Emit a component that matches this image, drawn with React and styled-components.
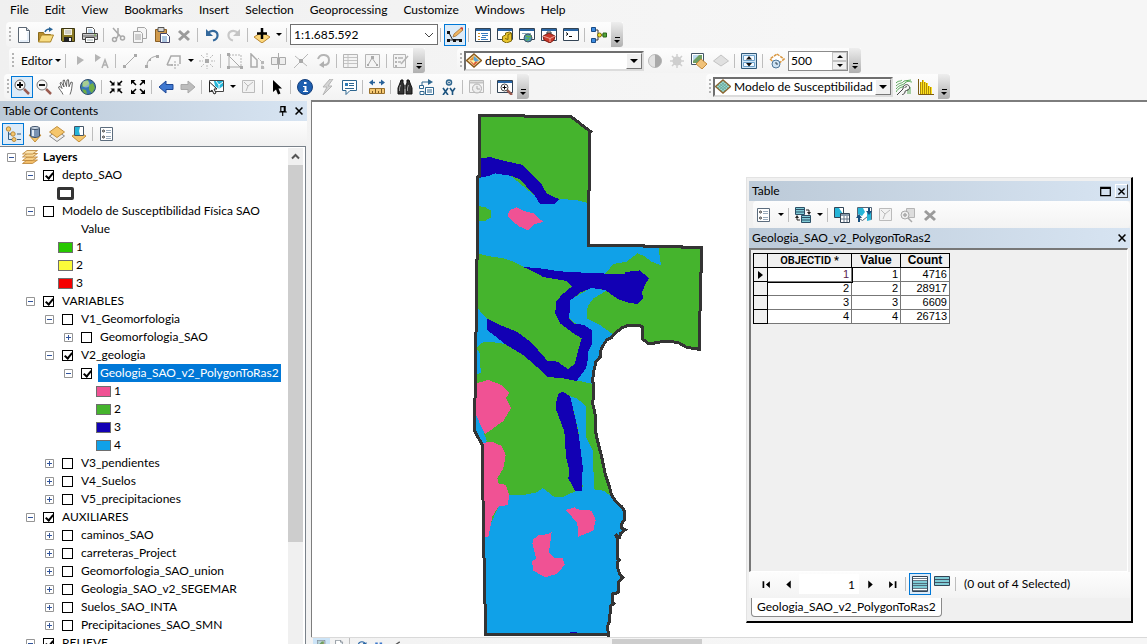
import styled, { createGlobalStyle, css } from 'styled-components'
import { useState } from 'react'

// 16x16 drawings, one for each tool
const glyphs = {
  newDoc: <><path d='M2.500 .5h8l3 3v12h-11z' fill='#fff' stroke='#5b6673' /><path d='M10.500 .5v3h3' fill='#d7dde4' stroke='#5b6673' /><path d='M12 5v9H4' fill='none' stroke='#cfe0f3' /></>,
  open: <><path d='M.5 14.500v-9h5l1 2h6v7z' fill='#b98f2e' stroke='#8a6a1c' /><path d='M.5 15l3-7h12l-3 7z' fill='#f7dc82' stroke='#a98327' /><path d='M7 5c1-3 3-3 5-3' stroke='#2a6496' fill='none' strokeWidth='1.500' /><path d='M11 0l4 2.200-4 2.800z' fill='#2a6496' /></>,
  save: <><path d='M1.500 1.500h13v13h-12l-1-1z' fill='#8a7a25' stroke='#3b3512' /><path d='M4 2h8v6H4z' fill='#f4f1df' /><path d='M5 4h6M5 6h6' stroke='#aaa' /><path d='M4 10h8v5H4z' fill='#222' /><path d='M9 11h2v3H9z' fill='#eee' /></>,
  print: <><path d='M4.500 6.500v-6h6l2 2v4' fill='#fff' stroke='#555' /><path d='M6 3h4M6 5h5' stroke='#8cb6db' /><path d='M.5 6.500h15v6H.5z' fill='#c9c9c9' stroke='#444' /><path d='M1 9h14' stroke='#666' /><path d='M3.500 10.500h9v5h-9z' fill='#fff' stroke='#444' /><path d='M5 13h6' stroke='#9aa' /><path d='M12 8h2' stroke='#6a3' /></>,
  cut: <g fill='none' stroke='#a8a8a8' strokeWidth='1.500'><path d='M3 1l8 9M8 1v8l-2 3' /><circle cx='4.500' cy='12.500' r='2' /><circle cx='12.500' cy='11' r='2' /></g>,
  copy: <g fill='#f5f5f5' stroke='#a5a5a5'><path d='M5.500 .5h7l2 2v9h-9z' /><path d='M1.500 4.500h7l2 2v9h-9z' /><path d='M3 8h6M3 10h6M3 12h6' /></g>,
  paste: <><path d='M1.500 2.500h11v12h-11z' fill='#d09a4c' stroke='#8b5f23' /><path d='M4 .5h6v4H4z' fill='#d8d8d8' stroke='#555' /><path d='M6.500 6.500h6l3 3v6h-9z' fill='#fff' stroke='#446' /><path d='M8 10h5M8 12h5M8 14h5' stroke='#5d8fc4' /></>,
  remove: <path d='M3 4l10 9M13 4L3 13' stroke='#9b9b9b' strokeWidth='3' />,
  undo: <><path d='M4 6c4-4 10-2 9.500 3-.3 2.500-2 4-4.500 4.500' fill='none' stroke='#34699c' strokeWidth='2.200' /><path d='M2 2v7h7z' fill='#34699c' /></>,
  redo: <><path d='M12 6c-4-4-10-2-9.500 3 .3 2.500 2 4 4.500 4.500' fill='none' stroke='#c8c8c8' strokeWidth='2.200' /><path d='M14 2v7H7z' fill='#c4c4c4' /></>,
  addData: <><path d='M8 5l8 5-8 6-8-6z' fill='#fbd679' stroke='#b98531' /><path d='M8 1v11M3 6.500h10' stroke='#000' strokeWidth='2.500' /></>,
  editorBar: <><path d='M1.500 5l4 7.500h9M2 13h13' stroke='#222' fill='none' /><path d='M0 4h3v3H0zM0 12h3v3H0zM6 12h3v3H6zM12 12h3v3h-3z' fill='#111' /><path d='M6 10l1-3 7-6 2 2-7 6z' fill='#efb45e' stroke='#a1743b' strokeWidth='.8' /><path d='M13 1l2-1 2 2-1 1z' fill='#d83a2d' /></>,
  tocWin: <><path d='M.5 1.500h15v13H.5z' fill='#fff' stroke='#345' /><path d='M1 2h14v2H1z' fill='#2865a5' /><path d='M3 6.500h2M3 9.500h2M3 12.500h2' stroke='#d08f25' /><path d='M6 6.500h7M7 8.500h6M6 10.500h5M6 12.500h7' stroke='#357ac0' /></>,
  catalog: <><path d='M.5 1.500h15v11H.5z' fill='#fff' stroke='#345' /><path d='M1 2h14v2H1z' fill='#2865a5' /><path d='M5.500 9.500l3-1.500v-2l4-1 2 1v8l-5 2-4-2z' fill='#e9c52e' stroke='#806a0a' /><path d='M8 11.500l3 1v-5l3-1' stroke='#806a0a' fill='none' /></>,
  search: <><path d='M.5 1.500h15v11H.5z' fill='#fff' stroke='#345' /><path d='M1 2h14v2H1z' fill='#2865a5' /><path d='M3 6.500h9' stroke='#8ab' /><circle cx='9' cy='11' r='4' fill='#4b9bb5' stroke='#456' /><path d='M7 9l3 1 2-1M7 13l3-1' stroke='#63b24c' strokeWidth='1.500' fill='none' /></>,
  toolbox: <><path d='M.5 1.500h15v12H.5z' fill='#fff' stroke='#345' /><path d='M1 2h14v2H1z' fill='#2865a5' /><path d='M2 9l6-3 6 3-1 4-4 3-6-3z' fill='#c9382a' stroke='#7d1b12' /><path d='M2 9l7 2.500 5-2.500M9 11v4' fill='none' stroke='#f2a598' /><path d='M6 7v-2h4v2' fill='none' stroke='#333' /></>,
  python: <><path d='M.5 1.500h15v12H.5z' fill='#fff' stroke='#345' /><path d='M1 2h14v2H1z' fill='#2865a5' /><path d='M3 5.500l2 1.500-2 1.500M6 9.500h3' fill='none' stroke='#000' /></>,
  model: <><path d='M4 3h3v10H4M7 8h6' fill='none' stroke='#333' /><path d='M.5 .5h4v4h-4zM.5 11.500h4v4h-4z' fill='#3d8be0' stroke='#174b86' /><circle cx='8.500' cy='8' r='2' fill='#f3e12c' stroke='#7b7009' /><path d='M12 6h3.500v4H12z' fill='#50a538' stroke='#2c661c' /></>,
  arrowTool: <path d='M5 3v9l7-5z' fill='#b5b5b5' />,
  arrowA: <><path d='M1 1v8l6-4.500z' fill='#b5b5b5' /><path d='M8 15l3-8 3 8M9 12h4' stroke='#b0b0b0' fill='none' strokeWidth='1.500' /></>,
  line: <><path d='M3 13L13 3' stroke='#aaa' /><path d='M1 12h3v3H1zM12 1h3v3h-3z' fill='#aaa' /></>,
  arc: <><path d='M3 13c0-6 4-9 10-10' stroke='#aaa' fill='none' /><path d='M1 12h3v3H1zM12 2h3v3h-3zM5 6h2v2H5z' fill='#aaa' /></>,
  poly: <><path d='M1 12l4-9h9v8M1 12h6' stroke='#aaa' fill='none' strokeWidth='1.500' /><path d='M9 8v8M5 12h8' stroke='#aaa' strokeDasharray='2 1' /></>,
  burst: <><path d='M6 6h4v4H6z' fill='#aaa' /><path d='M8 0v4M8 12v4M0 8h4M12 8h4M2 2l3 3M14 2l-3 3M2 14l3-3M14 14l-3-3' stroke='#b8b8b8' strokeDasharray='2 1' /></>,
  vertices: <><path d='M2 2h12v12' stroke='#b5b5b5' fill='none' strokeDasharray='2 1' /><path d='M0 0h3v3H0zM0 13h3v3H0zM13 13h3v3h-3z' fill='#aaa' /><path d='M2 3v11h11z' stroke='#aaa' fill='none' /></>,
  reshape: <><path d='M2 1v13h6V7z' stroke='#aaa' fill='none' strokeWidth='1.500' /><path d='M9 5l4 4v6h3' stroke='#b5b5b5' strokeDasharray='2 1' fill='none' /><path d='M12 8h3v3h-3zM12 13h3v3h-3z' fill='#b8b8b8' /></>,
  cutPoly: <path d='M.5 4.500h6v7h-6zM8.500 4.500h6v7h-6zM7.500 0v16' stroke='#aaa' fill='#eee' />,
  split: <><path d='M1 15L15 1M2 3l12 10' stroke='#b8b8b8' /><path d='M6 6h4v4H6z' fill='#aaa' /></>,
  rotate: <><path d='M3 6c2-6 11-5 11 1 0 3-2 5-5 5' stroke='#b5b5b5' strokeWidth='2' fill='none' /><path d='M4 12l5-4v7z' fill='#b0b0b0' /></>,
  attributes: <><path d='M.5 1.500h14v13H.5z' fill='#f4f4f4' stroke='#b5b5b5' /><path d='M1 4.500h13M1 7.500h13M1 10.500h13M5 2v12' stroke='#c4c4c4' /></>,
  sketch: <><path d='M.5 1.500h14v13H.5z' fill='#f4f4f4' stroke='#b5b5b5' /><path d='M3 12l4-7 5 7' stroke='#aaa' fill='none' /><path d='M6 3h3v3H6zM2 11h2v2H2zM11 11h2v2h-2z' fill='#aaa' /></>,
  create: <><path d='M.5 1.500h12v13H.5z' fill='#f4f4f4' stroke='#b5b5b5' /><path d='M2 4h2v2H2zM2 8h2v2H2zM2 12h2v2H2z' fill='#b4b4b4' /><path d='M5 5h5M5 9h3M8 11l7-8' stroke='#b4b4b4' strokeWidth='1.500' /></>,
  zoomIn: <><path d='M10 10l5 5' stroke='#9a5b50' strokeWidth='2.500' /><circle cx='6' cy='6' r='5' fill='#f7f7f7' stroke='#666' /><path d='M6 3v6M3 6h6' stroke='#000' strokeWidth='1.800' /></>,
  zoomOut: <><path d='M10 10l5 5' stroke='#9a5b50' strokeWidth='2.500' /><circle cx='6' cy='6' r='5' fill='#f7f7f7' stroke='#777' /><path d='M3 6h6' stroke='#000' strokeWidth='1.800' /></>,
  pan: <path d='M5 15.500c-1-3-4-5-4.500-7.500l1.500-.5 2 2L2 4l1.200-.7L6 8 5 1.500 6.300 1 8.500 7.500 9 1l1.500-.2.500 7L13 3l1.400.5c-.4 3-.6 8-2.400 12' fill='#fff' stroke='#555' strokeWidth='.9' />,
  globe: <><circle cx='8' cy='8' r='7.500' fill='#3978b5' stroke='#2d4c69' /><path d='M3 3l5-2 1 4-3 2-4 1zM9 6l4-2 2 5-3 5-3-3zM2 10l4 1 1 4-3-1z' fill='#6fae45' /><circle cx='6' cy='5' r='3.500' fill='#fff' opacity='.4' /></>,
  fixedIn: <><path d='M2 2l3 3M14 2l-3 3M2 14l3-3M14 14l-3-3' stroke='#000' strokeWidth='1.600' /><path d='M6.500 2.500v4h-4zM9.500 2.500v4h4zM6.500 13.500v-4h-4zM9.500 13.500v-4h4z' /></>,
  fixedOut: <><path d='M3 3l3 3M13 3l-3 3M3 13l3-3M13 13l-3-3' stroke='#000' strokeWidth='1.600' /><path d='M1 5.500V1h4.500zM15 5.500V1h-4.500zM1 10.500V15h4.500zM15 10.500V15h-4.500z' /></>,
  back: <path d='M1 8l7-6v3.500h7v5H8V14z' fill='#3f78d0' stroke='#1d4796' />,
  forward: <path d='M15 8L8 2v3.500H1v5h7V14z' fill='#bdbdbd' stroke='#a9a9a9' />,
  select: <><path d='M1.500 1.500h14v11h-14z' fill='#fff' stroke='#444' /><path d='M6 2h9v5l-4 3-4-3z' fill='#26b5d8' /><path d='M8 2l3 4 4-3M11 6v5' stroke='#fff' fill='none' /><path d='M1.500 3v10l2.500-2 2 4 2-1-2-4h3z' fill='#fff' stroke='#222' /></>,
  clear: <><path d='M1.500 1.500h12v12h-12z' fill='#f2f2f2' stroke='#bbb' /><path d='M3 3l4 4 5-4M7 7l-2 5' fill='none' stroke='#bbb' /></>,
  pointer: <path d='M4 1v12l3-2.500 2 5 2.500-1-2-5H13z' fill='#000' />,
  info: <><circle cx='8' cy='8' r='7.500' fill='#1d5fb0' stroke='#163f7b' /><path d='M7 3h2.500v2H7zM6 7h3.500v5h1.500v1H6v-1h1.500V8H6z' fill='#fff' /></>,
  bolt: <path d='M11 0L4 8h4l-4 8 9-9H9l5-7z' fill='#d5d5d5' stroke='#b5b5b5' />,
  htmlPopup: <><path d='M1.500 1.500h14v10H9l-4 4v-4H1.500z' fill='#fff' stroke='#2e668f' /><path d='M4 4h3v3H4z' fill='#2e7ab5' /><path d='M8 4.500h5M8 6.500h5M4 9.500h9' stroke='#2e668f' /></>,
  measure: <><path d='M.5 9.500h15v5H.5z' fill='#f4c873' stroke='#9a702b' /><path d='M3.500 12v2M6.500 10v4M9.500 12v2M12.500 10v4' stroke='#7d5a1f' /><path d='M2 3.500h4M10 3.500h4' stroke='#28629a' strokeWidth='1.500' /><path d='M0 3.500L4 .5v6zM16 3.500l-4-3v6z' fill='#28629a' /></>,
  find: <><path d='M4 1h2v3l1 2v9H1V9l2-5zM12 1h-2v3L9 6v9h6V9l-2-5z' fill='#333' stroke='#111' /><path d='M7 6h2v4H7z' fill='#555' /><path d='M2.500 12V9l1-3M10.500 12V9l1-3' stroke='#999' fill='none' /></>,
  route: <><path d='M.5 6.500h4v3h-4zM1 12.500h4v3H1z' fill='#fff' stroke='#2e668f' /><path d='M6.500 8.500h8v7h-8z' fill='#fff' stroke='#2e668f' /><path d='M8 11h5M8 13h5M3 6V3h7' stroke='#2e668f' fill='none' /><path d='M9 0l5 3-5 3z' fill='#2e668f' /></>,
  xy: <><circle cx='8' cy='3.500' r='2.500' fill='none' stroke='#2e668f' strokeWidth='1.500' /><circle cx='8' cy='3.500' r='1' fill='#2e668f' /><path d='M2 9l5 7M7 9l-5 7M9 9l2.500 3.500L14 9M11.500 12v4' stroke='#1f5580' strokeWidth='1.600' fill='none' /></>,
  time: <><path d='M.5 1.500h14v12H.5z' fill='#f4f4f4' stroke='#bbb' /><path d='M1 3.500h13' stroke='#c4c4c4' strokeWidth='2' /><circle cx='8' cy='9.500' r='4.500' fill='#eee' stroke='#b0b0b0' /><path d='M8 7v3h3' stroke='#aaa' fill='none' /></>,
  viewer: <><path d='M.5 1.500h15v12H.5z' fill='#fff' stroke='#345' /><path d='M1 2h14v2H1z' fill='#2865a5' /><path d='M10 11l5 5' stroke='#9a5b50' strokeWidth='2.500' /><circle cx='7.500' cy='8.500' r='3.500' fill='#fff' stroke='#444' /><path d='M7.500 6.500v4M5.500 8.500h4' stroke='#000' /></>,
  layerDiamond: <><path d='M8 1l7.500 6.500L8 14 .5 7.500z' fill='#f7dca0' stroke='#8a5a1c' strokeWidth='1.500' /><path d='M8 3L3.500 7l3.500 1z' fill='#e8902e' /><path d='M8 3l5 4.500L9 9 7.500 7z' fill='#5ca7d6' /><path d='M4 8l4 1 4-.5-4 4z' fill='#dd5230' /><path d='M6 7l3 1-1 3-3-3z' fill='#fff3a0' /></>,
  gridDiamond: <><path d='M8 1l7.500 6.500L8 14 .5 7.500z' fill='#9bdcd0' stroke='#8a6530' strokeWidth='1.500' /><path d='M4.500 4.500l7 6M6 3l7 6M3 6l7 6M11.500 4.500l-7 6M10 3L3 9M13 6l-7 6' stroke='#5a968e' strokeWidth='.7' /></>,
  contrast: <><circle cx='8' cy='8' r='6.500' fill='#e3e3e3' stroke='#bdbdbd' /><path d='M8 1.500a6.500 6.500 0 010 13z' fill='#a9a9a9' /></>,
  sun: <><circle cx='8' cy='8' r='4.500' fill='#cdcdcd' /><path d='M8 1v14M1 8h14M3 3l10 10M13 3L3 13' stroke='#cfcfcf' strokeWidth='1.500' /></>,
  swipeLayer: <><path d='M.5 .5h12v11H.5z' fill='#fff' stroke='#456' /><path d='M2 2h9v8H2z' fill='#6f9f63' /><path d='M2 2h6L2 8z' fill='#bcd9ee' /><path d='M10 6l6 5-5 5-6-5z' fill='#f0c27a' stroke='#c48a3b' /></>,
  flatDiamond: <path d='M8 2l7.500 6L8 13 .5 8z' fill='#e0e0e0' stroke='#c2c2c2' />,
  effects: <><path d='M.5 .5h15v15H.5z' fill='#cfe5f6' stroke='#2f5878' /><path d='M2.500 2.500h11v5h-11zM2.500 9.500h11v4h-11z' fill='#f2f9ff' stroke='#6ea3cc' /><path d='M8 3l3 3.500H5zM8 13.500l3-3.500H5z' fill='#111' /></>,
  flicker: <><path d='M8 1l7 5-7 6-7-6z' fill='#fff' stroke='#d99740' strokeWidth='1.500' strokeDasharray='3 1' /><circle cx='7' cy='11' r='4' fill='#cfe3f3' stroke='#4e7698' /><path d='M7 9v2h2' stroke='#345' fill='none' /></>,
  contour: <><path d='M0 4c3-3 4-1 6-3M0 7c4-4 6-2 8-5l7-1M0 10c4-5 6-3 9-6s5-1 7-1M0 13c3-5 5-4 8-6M14 8v7M12 10v5' stroke='#57a857' strokeWidth='1' fill='none' /><path d='M1 16l6-6c0-4 3-5 5-4s2 4 0 5-3 0-3 2-2 2-3 3M9 9c0-1 1-2 2-1' stroke='#444' fill='none' strokeWidth='1' /></>,
  histogram: <><path d='M.5 0v15.500H16' stroke='#7a5910' fill='none' /><path d='M2 3h2V1h2v2h2v1h2v3h2v1h2v7H2z' fill='#ffe21a' /><path d='M2.500 15V3M4.500 15V1M6.500 15V3M8.500 15V4M10.500 15V7M12.500 15V8' stroke='#a58208' strokeWidth='.9' /></>,
  listOrder: <><circle cx='3.500' cy='3' r='2.200' fill='#f5c66c' stroke='#b88a3d' /><circle cx='8' cy='8' r='2.200' fill='#f5c66c' stroke='#b88a3d' /><circle cx='9' cy='13.500' r='2' fill='#f5c66c' stroke='#b88a3d' /><path d='M3.500 6v7.500H7M4 8h2M12 8h4M12 13.500h4' stroke='#345d82' fill='none' /></>,
  listSource: <><path d='M2 9l6 7 6-7z' fill='#f5c66c' stroke='#c28f3c' /><path d='M3.500 2v8c2 2 7 2 9 0V2z' fill='#7a93b3' stroke='#3d5068' /><path d='M5 3v7h2V3z' fill='#dfe9f4' /><ellipse cx='8' cy='2' rx='4.500' ry='1.500' fill='#cfdbe8' stroke='#3d5068' /></>,
  listVisible: <><path d='M8 5l7.500 5L8 15.500 .5 10z' fill='#eee' stroke='#888' /><path d='M8 .5L15.500 6 8 11.500 .5 6z' fill='#f5c66c' stroke='#c28f3c' /></>,
  listSelected: <><path d='M1 10l7-4 7 4-7 6z' fill='#f5c66c' stroke='#c28f3c' /><path d='M3.500 .5h9v9h-9z' fill='#fff' stroke='#456' /><path d='M4 1h5l-1 4 1 4H4z' fill='#26b5d8' /></>,
  options: <><path d='M1.500 1.500h12v13h-12z' fill='#fff' stroke='#5c6c7d' /><circle cx='4.500' cy='5' r='1' fill='none' stroke='#333' /><circle cx='4.500' cy='11' r='1' fill='none' stroke='#333' /><path d='M7 4.500h5M7 6.500h5M7 10.500h5M7 12.500h5' stroke='#9ab' /></>,
  related: <><path d='M.5 .5h9v7h-9zM6.500 8.500h9v7h-9z' fill='#7fcbd6' stroke='#2b4f66' /><path d='M1 2.500h8M1 5h8M7 10.500h8M7 13h8' stroke='#2b4f66' /><path d='M11 3h3v3M5 13H2v-3' stroke='#222' fill='none' /><path d='M12 5h4l-2 3zM0 11h4l-2-3z' fill='#222' /></>,
  selectAttr: <><path d='M.5 .5h9v10h-9z' fill='#26b5d8' stroke='#345' /><path d='M5 1h4v6z' fill='#fff' /><path d='M6.500 6.500h9v9h-9z' fill='#fff' stroke='#345' /><path d='M7 7h8v2H7z' fill='#89a' /><path d='M7 12h8M10 9v6M13 9v6' stroke='#678' /></>,
  switchSel: <><path d='M1.500 .5h14v12l-4-3-5 4-5-3z' fill='#fff' stroke='#567' /><path d='M2 1h5l2 4-3 4-4-2zM11 6l4-2v9l-4 1z' fill='#26b5d8' /><path d='M3 15V9M13 1v5' stroke='#174f7d' strokeWidth='2' /><path d='M0 11l3-4 3 4zM10 4l3 4 3-4z' fill='#174f7d' /></>,
  zoomSel: <><path d='M6.500 1.500h8v9h-8z' fill='#ddd' stroke='#b5b5b5' /><circle cx='5' cy='8' r='4' fill='#eee' stroke='#aaa' /><path d='M8 11l4 4M5 6v4M3 8h4' stroke='#aaa' strokeWidth='1.500' /></>,
  allRecords: <><path d='M.5 .5h15v15H.5z' fill='#fff' stroke='#345' /><path d='M1 5h14v7H1z' fill='#7fcbd6' /><path d='M1 2.500h14M1 4.500h14M1 7.500h14M1 9.500h14M1 12.500h14M1 14.500h14' stroke='#456' strokeWidth='.8' /></>,
  selRecords: <><path d='M.5 .5h15v9H.5z' fill='#7fcbd6' stroke='#345' /><path d='M1 3.500h14M1 6.500h14' stroke='#456' /></>,
  layers: <g stroke='#b98232' strokeWidth='.8'><path d='M.5 14.500h10l5-3.500H5z' fill='#f2bd68' /><path d='M.5 11.500h10l5-3.500H5z' fill='#f7cf87' /><path d='M.5 8h10l5-3.500H5z' fill='#f9d998' /><path d='M.5 5h10l5-3.500H5z' fill='#fbe2ad' /></g>,
  pin: <path d='M4.500 1h7v8h-7zM2 9.500h12M7.500 10v6M10 1v8' stroke='#000' fill='none' strokeWidth='1.800' />,
  close: <path d='M2.500 2.500l11 11M13.500 2.500l-11 11' stroke='#000' strokeWidth='2.500' />,
  maximize: <path d='M1 2h14v12H1zM1 3.500h14' stroke='#000' fill='none' strokeWidth='1.800' />,
  first: <path d='M1 2h3v12H1zM14 2v12L7 8z' />,
  prev: <path d='M12 1v14L4 8z' />,
  next: <path d='M4 1v14l8-7z' />,
  last: <path d='M2 2v12l7-6zM12 2h3v12h-3z' />,
  refresh: <path d='M2 8c1-7 11-7 11 0M10 5l3 3 2-4' stroke='#2865a5' fill='none' strokeWidth='1.800' />,
  pause: <path d='M4 4v12M11 4v12' stroke='#3d78cc' strokeWidth='4' />,
  caret: <path d='M14 3L5 9l9 6' stroke='#555' strokeWidth='2' fill='none' />
}

function Icon ({ name, size = 16 }) {
  return <svg width={size} height={size} viewBox='0 0 16 16' aria-hidden='true'>{glyphs[name]}</svg>
}

function Tool ({ name, active }) {
  return <ToolButton type='button' aria-label={name} $active={active}><Icon name={name} /></ToolButton>
}

function Tools ({ items }) {
  return items.map((item, i) => {
    if (item === '|') return <Separator key={i} />
    if (item === 'v') return <DropArrow key={i} type='button' aria-label='more'><Triangle /></DropArrow>
    if (item[0] === '*') return <Tool key={i} name={item.slice(1)} active />
    return <Tool key={i} name={item} />
  })
}

function More () {
  return <Overflow type='button' aria-label='toolbar options'><i /><Triangle /></Overflow>
}

function LayerCombo ({ icon, label, width }) {
  return (
    <Sunken $width={width}>
      <Icon name={icon} />
      <PlainSelect aria-label='layer'><option>{label}</option></PlainSelect>
      <ComboArrow><Triangle $big /></ComboArrow>
    </Sunken>
  )
}

const menus = ['File', 'Edit', 'View', 'Bookmarks', 'Insert', 'Selection', 'Geoprocessing', 'Customize', 'Windows', 'Help']

const tree = [
  { level: 0, open: true, text: 'Layers', root: true },
  { level: 1, open: true, checked: true, text: 'depto_SAO' },
  { level: 1, outline: true },
  { level: 1, open: true, text: 'Modelo de Susceptibilidad Física SAO' },
  { level: 1, heading: 'Value' },
  { level: 1, color: '#27c800', text: '1' },
  { level: 1, color: '#fbfb3a', text: '2' },
  { level: 1, color: '#f50000', text: '3' },
  { level: 1, open: true, checked: true, text: 'VARIABLES' },
  { level: 2, open: true, text: 'V1_Geomorfologia' },
  { level: 3, text: 'Geomorfologia_SAO' },
  { level: 2, open: true, checked: true, text: 'V2_geologia' },
  { level: 3, open: true, checked: true, selected: true, text: 'Geologia_SAO_v2_PolygonToRas2' },
  { level: 3, color: '#f05294', text: '1' },
  { level: 3, color: '#45b42d', text: '2' },
  { level: 3, color: '#1200b4', text: '3' },
  { level: 3, color: '#10a1e8', text: '4' },
  { level: 2, text: 'V3_pendientes' },
  { level: 2, text: 'V4_Suelos' },
  { level: 2, text: 'V5_precipitaciones' },
  { level: 1, open: true, checked: true, text: 'AUXILIARES' },
  { level: 2, text: 'caminos_SAO' },
  { level: 2, text: 'carreteras_Project' },
  { level: 2, text: 'Geomorfologia_SAO_union' },
  { level: 2, text: 'Geologia_SAO_v2_SEGEMAR' },
  { level: 2, text: 'Suelos_SAO_INTA' },
  { level: 2, text: 'Precipitaciones_SAO_SMN' },
  { level: 1, open: true, checked: true, text: 'RELIEVE' }
]

function TreeNode ({ node }) {
  const [checked, setChecked] = useState(!!node.checked)
  if (node.heading) return <Row $level={node.level}><Heading>{node.heading}</Heading></Row>
  if (node.color || node.outline) {
    return (
      <Row $level={node.level}>
        <Swatch $color={node.color} $outline={node.outline} />
        <span>{node.text}</span>
      </Row>
    )
  }
  return (
    <Row $level={node.level}>
      <Expander type='button' aria-label='expand'>
        <svg width='9' height='9' viewBox='0 0 9 9'>
          <path d={node.open ? 'M2 4.500h5' : 'M2 4.500h5M4.500 2v5'} stroke='#31549c' />
        </svg>
      </Expander>
      {node.root
        ? <Root><Icon name='layers' /><b>{node.text}</b></Root>
        : (
          <NodeLabel $selected={node.selected}>
            <input type='checkbox' checked={checked} onChange={e => setChecked(e.target.checked)} />
            <span>{node.text}</span>
          </NodeLabel>
          )}
    </Row>
  )
}

function Contents () {
  return (
    <TocPanel>
      <TitleBar>
        <h2>Table Of Contents</h2>
        <TitleButton type='button' aria-label='pin'><Icon name='pin' size={10} /></TitleButton>
        <TitleButton type='button' aria-label='close'><Icon name='close' size={10} /></TitleButton>
      </TitleBar>
      <TocTools>
        <Tools items={['*listOrder', 'listSource', 'listVisible', 'listSelected', '|', 'options']} />
      </TocTools>
      <TreeBox>
        <Tree>{tree.map((node, i) => <TreeNode key={i} node={node} />)}</Tree>
        <ScrollBar>
          <svg width='15' height='17' viewBox='0 0 15 17'><path d='M4 10.500L7.500 7l3.500 3.500' fill='none' stroke='#555' strokeWidth='2' /></svg>
          <Thumb />
        </ScrollBar>
      </TreeBox>
    </TocPanel>
  )
}

const boundary = 'M57 46L190 46 194 49 332 49 392 95 389 98 389 270 386 272 386 436 550 436 552 440 666 440 668 443 725 443 725 515 722 518 722 600 719 650 719 748 680 742 655 728 625 723 600 726 568 732 548 718 548 682 540 676 505 676 485 684 468 697 455 712 440 720 428 738 423 750 421 770 408 785 402 810 398 840 402 870 398 910 407 950 406 990 412 1020 425 1070 435 1120 445 1150 455 1185 468 1205 485 1220 494 1235 493 1260 484 1272 486 1285 496 1289 482 1300 478 1312 466 1303 474 1320 472 1375 478 1380 472 1386 472 1400 478 1420 488 1432 476 1445 474 1478 458 1482 458 1505 462 1510 452 1518 448 1565 442 1580 446 1606 430 1603 77 1603 73 1420 70 1280 67 1035 43 992 43 898 47 890 47 700 50 690 50 480 53 475 53 232 57 228z'

function GeologyMap () {
  return (
    <svg width='260' height='535' viewBox='0 6 780 1605' shapeRendering='crispEdges' role='img' aria-label='map'>
      <clipPath id='dept'><path d={boundary} /></clipPath>
      <g clipPath='url(#dept)'>
        <path fill='#45b42d' d='M0 0h780v1632H0z' />
        <g fill='#10a1e8'>
          <path d='M50 234L85 228 105 220 150 226 228 290 285 308 300 298 345 299 365 304 390 311 390 430 595 440 603 496 575 485 552 468 532 460 500 485 460 492 433 524 300 520 190 500 165 487 130 475 95 470 50 460z' />
          <path d='M395 562L440 572 400 595 383 620 380 655 420 675 457 702 470 720 420 770 410 810 400 852 345 840 380 780 370 690 328 655 330 600z' />
          <path d='M40 620L53 625 80 655 85 690 135 732 90 725 65 728 50 745 60 760 62 818 50 825 40 825zM40 940L50 942 65 960 72 1000 80 1020 78 1030 62 1030 40 1000z' />
          <path d='M130 1187L195 1184 228 1178 248 1164 282 1190 310 1190 350 1172 368 1160 355 990 330 888 350 895 378 918 378 1010 400 1055 401 1168 430 1172 452 1187 520 1190 520 1632 60 1632 75 1310z' />
        </g>
        <g fill='#1200b4'>
          <path d='M57 176L90 171 130 182 185 194 215 222 245 254 260 280 298 298 285 312 240 312 225 288 180 238 155 228 105 220 85 228 57 234z' />
          <path d='M190 501L240 505 300 514 410 520 495 522 497 516 540 511 566 535 552 562 545 580 551 595 535 611 510 610 475 598 435 570 395 564 362 577 330 602 328 655 340 670 372 675 395 690 395 735 384 755 384 775 378 805 350 843 300 833 262 832 230 800 190 765 135 732 82 690 80 655 120 675 170 695 215 728 262 782 292 785 325 808 345 790 355 750 365 715 340 700 300 670 286 640 288 605 305 585 335 560 320 543 250 531 215 512z' />
          <path d='M290 895L297 880 307 875 330 888 345 950 357 1010 368 1100 366 1172 345 1172 325 1135 328 1110 318 1070 313 995 288 928zM328 1600L335 1595 350 1595 354 1602z' />
        </g>
        <path fill='#45b42d' d='M50 318L75 321 93 332 93 352 75 363 50 362z' />
        <g fill='#f05294'>
          <path d='M142 345L150 330 170 322 190 332 220 340 250 366 225 372 205 392 175 378 145 352z' />
          <path d='M48 850L85 840 125 855 148 878 138 895 153 925 130 963 75 1003 48 945zM60 1030L95 1025 125 1038 137 1065 130 1105 112 1135 115 1150 138 1155 147 1185 144 1215 115 1220 97 1250 85 1310 60 1310z' />
          <path d='M316 1230L345 1222 350 1228 395 1232 407 1260 400 1292 355 1310 352 1270 335 1250zM220 1318L235 1306 265 1302 275 1296 267 1356 283 1374 308 1374 314 1395 290 1422 255 1432 220 1412 216 1385 228 1375 217 1330z' />
        </g>
      </g>
      <path d={boundary} fill='none' stroke='#343434' strokeWidth='9' />
    </svg>
  )
}

const records = [[1, 1, 4716], [2, 2, 28917], [3, 3, 6609], [4, 4, 26713]]

function TableWindow () {
  return (
    <Win>
      <TitleBar>
        <h2>Table</h2>
        <TitleButton type='button' aria-label='maximize'><Icon name='maximize' size={11} /></TitleButton>
        <TitleButton type='button' aria-label='close' $boxed><Icon name='close' size={9} /></TitleButton>
      </TitleBar>
      <WinTools>
        <Tools items={['options', 'v', '|', 'related', 'v', '|', 'selectAttr', 'switchSel', 'clear', 'zoomSel', 'remove']} />
      </WinTools>
      <TitleBar>
        <h2>Geologia_SAO_v2_PolygonToRas2</h2>
        <TitleButton type='button' aria-label='close table'><Icon name='close' size={10} /></TitleButton>
      </TitleBar>
      <GridArea>
        <Grid>
          <thead>
            <tr><th aria-label='row' /><Narrow>OBJECTID *</Narrow><th>Value</th><th>Count</th></tr>
          </thead>
          <tbody>
            {records.map((r, i) => (
              <tr key={r[0]}>
                <th>{i === 0 && <svg width='5' height='8' viewBox='0 0 5 8'><path d='M0 0v8l5-4z' /></svg>}</th>
                {r.map((v, c) => <Cell key={c} $current={i === 0 && c === 0}>{v}</Cell>)}
              </tr>
            ))}
          </tbody>
        </Grid>
      </GridArea>
      <RecordBar>
        <Nav type='button' aria-label='first'><Icon name='first' size={9} /></Nav>
        <Nav type='button' aria-label='previous'><Icon name='prev' size={9} /></Nav>
        <RecordInput aria-label='record' defaultValue='1' />
        <Nav type='button' aria-label='next'><Icon name='next' size={9} /></Nav>
        <Nav type='button' aria-label='last'><Icon name='last' size={9} /></Nav>
        <Tools items={['|', '*allRecords', 'selRecords', '|']} />
        <Count>(0 out of 4 Selected)</Count>
      </RecordBar>
      <Tabs><Tab type='button'>Geologia_SAO_v2_PolygonToRas2</Tab></Tabs>
    </Win>
  )
}

export default function App () {
  return (
    <Page>
      <Global />
      <MenuBar>{menus.map(m => <button type='button' key={m}>{m}</button>)}</MenuBar>
      <BarRow $start={6}>
        <ToolBar>
          <Grip />
          <Tools items={['newDoc', 'open', 'save', 'print', '|', 'cut', 'copy', 'paste', 'remove', '|', 'undo', 'redo', '|', 'addData', 'v', '|']} />
          <ScaleBox>
            <PlainSelect aria-label='scale'><option>1:1.685.592</option></PlainSelect>
            <svg width='14' height='8' viewBox='0 0 14 8'><path d='M2 2l4 4 4-4' fill='none' stroke='#444' /></svg>
          </ScaleBox>
          <Tools items={['|', '*editorBar', '|', 'tocWin', 'catalog', 'search', 'toolbox', 'python', '|', 'model']} />
          <More />
        </ToolBar>
      </BarRow>
      <BarRow $start={9}>
        <ToolBar>
          <Grip />
          <EditorMenu type='button'>Editor<Triangle /></EditorMenu>
          <Tools items={['|', 'arrowTool', 'arrowA', '|', 'line', 'arc', 'poly', 'v', 'burst', '|', 'vertices', 'reshape', 'cutPoly', 'split', 'rotate', '|', 'attributes', 'sketch', '|', 'create']} />
          <More />
        </ToolBar>
        <ToolBar $gap={32}>
          <Grip />
          <LayerCombo icon='layerDiamond' label='depto_SAO' width={180} />
          <Tools items={['contrast', 'sun', 'swipeLayer', 'flatDiamond', '|', 'effects', '|', 'flicker']} />
          <Spin>
            <input type='text' aria-label='flicker rate' defaultValue='500' />
            <SpinButtons>
              <button type='button' aria-label='up'><Triangle $up /></button>
              <button type='button' aria-label='down'><Triangle /></button>
            </SpinButtons>
          </Spin>
          <More />
        </ToolBar>
      </BarRow>
      <BarRow $start={4}>
        <ToolBar>
          <Grip />
          <Tools items={['*zoomIn', 'zoomOut', 'pan', 'globe', '|', 'fixedIn', 'fixedOut', '|', 'back', 'forward', '|', 'select', 'v', 'clear', '|', 'pointer', '|', 'info', 'bolt', 'htmlPopup', '|', 'measure', '|', 'find', 'route', 'xy', '|', 'time', '|', 'viewer']} />
          <More />
        </ToolBar>
        <ToolBar $gap={177}>
          <Grip />
          <LayerCombo icon='gridDiamond' label='Modelo de Susceptibilidad Física SAO' width={180} />
          <Tools items={['contour', 'histogram']} />
          <More />
        </ToolBar>
      </BarRow>
      <Main>
        <Contents />
        <MapPane>
          <Canvas><GeologyMap /><TableWindow /></Canvas>
          <ViewBar>
            <ViewTab type='button' aria-label='data view' $active><Icon name='swipeLayer' size={10} /></ViewTab>
            <ViewTab type='button' aria-label='layout view'><Icon name='newDoc' size={10} /></ViewTab>
            <Separator />
            <ViewTab type='button' aria-label='refresh'><Icon name='refresh' size={10} /></ViewTab>
            <ViewTab type='button' aria-label='pause'><Icon name='pause' size={10} /></ViewTab>
            <ViewTab type='button' aria-label='scroll left'><Icon name='caret' size={10} /></ViewTab>
            <HTrack><i /></HTrack>
          </ViewBar>
        </MapPane>
      </Main>
    </Page>
  )
}

const Global = createGlobalStyle`
* { box-sizing: border-box; }
body {
  margin: 0;
  font: 12px/18px Lato, "Noto Sans", sans-serif;
  color: #000;
}
button, input, select {
  font: inherit;
  color: inherit;
  margin: 0;
  padding: 0;
  border: 0;
  border-radius: 0;
  background: none;
}
svg { display: block; flex: none; }
`
const Page = styled.div`
display: flex;
flex-direction: column;
height: 100vh;
overflow: hidden;
background: linear-gradient(90deg, #f0f0f0, #f6f6f6 70%);
`
const MenuBar = styled.nav`
display: flex;
gap: 16px;
height: 22px;
padding: 0 10px;
align-items: flex-start;
& > button {
  line-height: 20px;
}
`
const BarRow = styled.div`
display: flex;
height: 26px;
padding-left: ${p => p.$start}px;
`
const ToolBar = styled.div`
display: flex;
align-items: center;
height: 25px;
margin-left: ${p => p.$gap || 0}px;
border-radius: 4px 0 0 4px;
background: linear-gradient(#fdfdfd, #f3f3f3);
`
const Grip = styled.i`
width: 2px;
height: 15px;
margin: 0 2px 0 3px;
background: repeating-linear-gradient(#b4b4b4 0 2px, transparent 2px 4px);
`
const ToolButton = styled.button`
display: flex;
align-items: center;
justify-content: center;
flex: none;
width: 22px;
height: 22px;
border: 1px solid transparent;
${p => p.$active && css`
  border-color: #0078d7;
  background: #dcebf8;
`}
`
const Separator = styled.i`
flex: none;
width: 1px;
height: 14px;
margin: 0 3px 0 2px;
background: #bdbdbd;
`
const DropArrow = styled.button`
display: flex;
justify-content: center;
width: 11px;
`
const Triangle = styled.i`
width: 0;
height: 0;
border: ${p => p.$big ? 4 : 3}px solid transparent;
${p => p.$up
  ? css`border-bottom-color: #000; border-top-width: 0;`
  : css`border-top-color: #000; border-bottom-width: 0;`}
`
const Overflow = styled.button`
display: flex;
flex-direction: column;
align-items: center;
justify-content: flex-end;
gap: 2px;
align-self: stretch;
width: 12px;
margin-left: 1px;
padding-bottom: 4px;
border-radius: 0 3px 3px 0;
background: linear-gradient(#eee, #b0b0b0);
& > i:first-child {
  width: 5px;
  height: 1px;
  background: #000;
}
`
const ScaleBox = styled.div`
display: flex;
align-items: center;
width: 148px;
height: 21px;
border: 1px solid #707070;
background: #fff;
`
const PlainSelect = styled.select`
appearance: none;
flex: 1;
min-width: 0;
height: 16px;
padding-left: 3px;
line-height: 16px;
overflow: hidden;
`
const Sunken = styled.div`
display: flex;
align-items: center;
width: ${p => p.$width}px;
height: 20px;
border: 2px solid #6f6f6f;
border-right-color: #dcdcdc;
border-bottom-color: #dcdcdc;
background: #fff;
`
const ComboArrow = styled.span`
display: flex;
align-items: center;
justify-content: center;
width: 16px;
height: 16px;
border: 1px solid #fff;
border-right-color: #777;
border-bottom-color: #777;
background: #f0f0f0;
`
const EditorMenu = styled.button`
display: flex;
align-items: center;
gap: 2px;
width: 47px;
padding-left: 5px;
`
const Spin = styled.div`
display: flex;
width: 60px;
height: 20px;
border: 1px solid #8b8b8b;
background: #fff;
& > input {
  flex: 1;
  min-width: 0;
  padding-left: 2px;
}
`
const SpinButtons = styled.div`
display: flex;
flex-direction: column;
width: 15px;
& > button {
  display: flex;
  flex: 1;
  align-items: center;
  justify-content: center;
  border: 1px solid #c4c4c4;
  background: #f0f0f0;
}
`
const Main = styled.main`
display: flex;
flex: 1;
min-height: 0;
`
const TocPanel = styled.aside`
display: flex;
flex-direction: column;
flex: none;
width: 307px;
padding-top: 1px;
`
const TitleBar = styled.header`
display: flex;
align-items: center;
gap: 3px;
flex: none;
height: 20px;
padding: 0 2px;
background: linear-gradient(90deg, #bccad8, #d7e4f2);
& > h2 {
  flex: 1;
  margin: 0;
  padding-left: 1px;
  font-size: 12px;
  font-weight: 400;
}
`
const TitleButton = styled.button`
display: flex;
align-items: center;
justify-content: center;
width: 13px;
height: 14px;
${p => p.$boxed && css`border: 1px solid #444; border-top-color: #fff; border-left-color: #fff;`}
`
const TocTools = styled.div`
display: flex;
align-items: center;
flex: none;
height: 25px;
padding-left: 2px;
background: linear-gradient(#fdfdfd, #f1f1f1);
`
const TreeBox = styled.div`
display: flex;
flex: 1;
min-height: 0;
margin-right: 1px;
border: 2px solid #7a828a;
border-width: 1px 1px 0 0;
padding: 1px 2px 0 0;
background: #fff;
`
const Tree = styled.ul`
flex: 1;
min-width: 0;
margin: 0;
padding: 0;
overflow: hidden;
list-style: none;
`
const Row = styled.li`
display: flex;
align-items: center;
height: 18px;
padding-left: ${p => 7 + 19 * p.$level}px;
white-space: nowrap;
`
const Expander = styled.button`
flex: none;
width: 9px;
height: 9px;
border-radius: 1px;
background: #fff;
box-shadow: inset 0 0 0 1px #959595;
`
const Root = styled.span`
display: flex;
align-items: center;
gap: 5px;
padding-left: 6px;
`
const NodeLabel = styled.label`
display: flex;
align-items: center;
gap: 6px;
padding-left: 8px;
& > input {
  appearance: none;
  width: 11px;
  height: 11px;
  border: 1px solid #000;
  background: #fff;
}
& > input:checked::after {
  content: '';
  display: block;
  width: 3px;
  height: 6px;
  margin: 0 3px;
  border: solid #000;
  border-width: 0 2px 2px 0;
  transform: rotate(40deg);
}
& > span {
  padding: 0 2px;
  ${p => p.$selected && css`background: #0078d7; color: #fff;`}
}
`
const Heading = styled.span`
padding-left: 55px;
`
const Swatch = styled.i`
width: 15px;
height: 11px;
margin: 0 3px 0 32px;
border: 1px solid #6e6e6e;
background: ${p => p.$color || '#fff'};
${p => p.$outline && css`
  width: 17px;
  height: 13px;
  margin-left: 31px;
  border: 3px solid #343434;
  border-radius: 2px;
`}
`
const ScrollBar = styled.div`
width: 15px;
background: #f0f0f0;
`
const Thumb = styled.div`
height: 76%;
background: #cdcdcd;
`
const MapPane = styled.section`
display: flex;
flex-direction: column;
flex: 1;
min-width: 0;
margin-left: 4px;
`
const Canvas = styled.div`
position: relative;
flex: 1;
min-height: 0;
overflow: hidden;
padding-left: 148px;
border: 2px solid #7d7d7d;
border-width: 2px 0 0 1px;
background: #fff;
`
const ViewBar = styled.div`
display: flex;
align-items: flex-start;
flex: none;
height: 7px;
overflow: hidden;
border-top: 1px solid #d9d9d9;
padding-left: 2px;
`
const ViewTab = styled.button`
display: flex;
flex: none;
justify-content: center;
width: 17px;
height: 20px;
padding-top: 2px;
background: ${p => p.$active ? '#cce4f7' : 'none'};
`
const HTrack = styled.div`
flex: 1;
padding: 1px 0 0 208px;
& > i {
  display: block;
  width: 90px;
  height: 16px;
  background: #cdcdcd;
}
`
const Win = styled.section`
position: absolute;
top: 75px;
right: 14px;
display: flex;
flex-direction: column;
width: 387px;
height: 446px;
padding: 3px 1px 3px 2px;
border: 1px solid #e3e3e3;
border-right: 2px solid #000;
border-bottom: 2px solid #000;
background: #f0f0f0;
`
const WinTools = styled.div`
display: flex;
align-items: center;
flex: none;
height: 27px;
margin-left: 4px;
border-radius: 4px;
background: linear-gradient(#fdfdfd, #f3f3f3);
`
const GridArea = styled.div`
flex: 1;
margin: 0 2px 0 0;
padding: 3px 0 0 2px;
border: 2px solid #777;
border-right: 1px solid #fff;
border-bottom: 1px solid #fff;
`
const Grid = styled.table`
border-collapse: collapse;
font: 11px/13px "Liberation Sans", Arial, sans-serif;
& th, & td {
  height: 14px;
  padding: 0 2px;
  border: 1px solid #777;
}
& th {
  background: #f0f0f0;
  border-color: #000;
}
& thead th {
  width: 49px;
  font-size: 12px;
}
& th:first-child {
  width: 14px;
  padding: 0 4px;
}
`
const Narrow = styled.th`
&&& {
  width: 84px;
  padding: 1px 2px 0;
  font: 600 11px/12px Roboto, sans-serif;
}
`
const Cell = styled.td`
text-align: right;
background: #fff;
${p => p.$current && css`outline: 1px solid #000; color: #5a2350;`}
`
const RecordBar = styled.div`
display: flex;
align-items: center;
flex: none;
height: 26px;
padding: 0 0 2px 6px;
background: linear-gradient(#fdfdfd, #f3f3f3);
`
const Nav = styled.button`
display: flex;
align-items: center;
justify-content: center;
width: 22px;
height: 22px;
`
const RecordInput = styled.input`
width: 60px;
height: 20px;
padding-right: 4px;
background: #fff;
text-align: right;
`
const Count = styled.span`
padding-left: 5px;
`
const Tabs = styled.div`
flex: none;
height: 20px;
margin-left: 2px;
`
const Tab = styled.button`
height: 19px;
padding: 0 5px;
border: 1px solid #8a8a8a;
border-top: 0;
border-radius: 0 0 4px 4px;
background: #fff;
`
